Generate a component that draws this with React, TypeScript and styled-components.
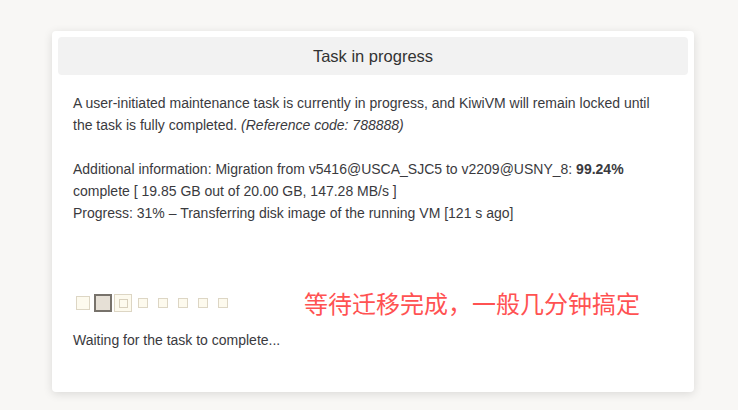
import React from "react";
import styled, { createGlobalStyle } from "styled-components";

const GlobalStyle = createGlobalStyle`
	html, body {
		margin: 0;
		padding: 0;
		background: #f8f7f5;
	}
	body {
		font-family: "Liberation Sans", Arial, sans-serif;
		color: #3a3a3e;
	}
`;

const Page = styled.div`
	padding: 31px 0 17px 52px;
`;

const Card = styled.div`
	width: 642px;
	box-sizing: border-box;
	background: #ffffff;
	border-radius: 4px;
	box-shadow: 0 2px 10px rgba(0, 0, 0, 0.12);
	padding: 6px 6px 41px;
`;

const Header = styled.div`
	height: 38px;
	background: #f2f2f2;
	border-radius: 4px;
	display: flex;
	align-items: center;
	justify-content: center;
	font-size: 16.5px;
	color: #333;
`;

const Body = styled.div`
	padding: 17px 15px 0;
	font-size: 14px;
	line-height: 22px;
`;

const Para = styled.p<{ $gap?: number }>`
	margin: 0 0 ${({ $gap }) => $gap ?? 0}px;
	white-space: nowrap;
`;

const LoaderRow = styled.div`
	display: flex;
	align-items: center;
	height: 24px;
	margin-top: 1px;
	margin-bottom: 14px;
`;

const Squares = styled.div`
	display: flex;
	align-items: center;
`;

const Cell = styled.div`
	width: 20px;
	height: 20px;
	display: flex;
	align-items: center;
	justify-content: center;
`;

type SquareKind = "small" | "faded" | "active" | "next";

const Square = styled.div<{ $kind: SquareKind }>`
	box-sizing: border-box;
	display: flex;
	align-items: center;
	justify-content: center;
	width: ${({ $kind }) => ($kind === "small" ? 10 : $kind === "faded" ? 14 : 18)}px;
	height: ${({ $kind }) => ($kind === "small" ? 10 : $kind === "faded" ? 14 : 18)}px;
	border: ${({ $kind }) => ($kind === "active" ? "2px solid #77726b" : "1px solid #ddd6c4")};
	background: ${({ $kind }) => ($kind === "active" ? "#e6e0d6" : "#fdfaee")};
`;

const Inner = styled.div`
	width: 9px;
	height: 9px;
	box-sizing: border-box;
	border: 1px solid #d8d0bd;
`;

const Note = styled.span`
	margin-left: 71px;
	font-family: "Noto Sans CJK SC", "Noto Sans", sans-serif;
	font-size: 24px;
	color: #ff5252;
	line-height: 24px;
`;

const kinds: SquareKind[] = ["faded", "active", "next", "small", "small", "small", "small", "small"];

export default function App() {
	return (
		<>
			<GlobalStyle />
			<Page>
				<Card>
					<Header>Task in progress</Header>
					<Body>
						<Para $gap={22}>
							A user-initiated maintenance task is currently in progress, and KiwiVM will remain locked until
							<br />
							the task is fully completed. <em>(Reference code: 788888)</em>
						</Para>
						<Para $gap={67}>
							Additional information: Migration from v5416@USCA_SJC5 to v2209@USNY_8: <b>99.24%</b>
							<br />
							complete [ 19.85 GB out of 20.00 GB, 147.28 MB/s ]
							<br />
							Progress: 31% – Transferring disk image of the running VM [121 s ago]
						</Para>
						<LoaderRow>
							<Squares>
								{kinds.map((k, i) => (
									<Cell key={i}>
										<Square $kind={k}>{k === "next" && <Inner />}</Square>
									</Cell>
								))}
							</Squares>
							<Note>等待迁移完成，一般几分钟搞定</Note>
						</LoaderRow>
						<Para>Waiting for the task to complete...</Para>
					</Body>
				</Card>
			</Page>
		</>
	);
}
